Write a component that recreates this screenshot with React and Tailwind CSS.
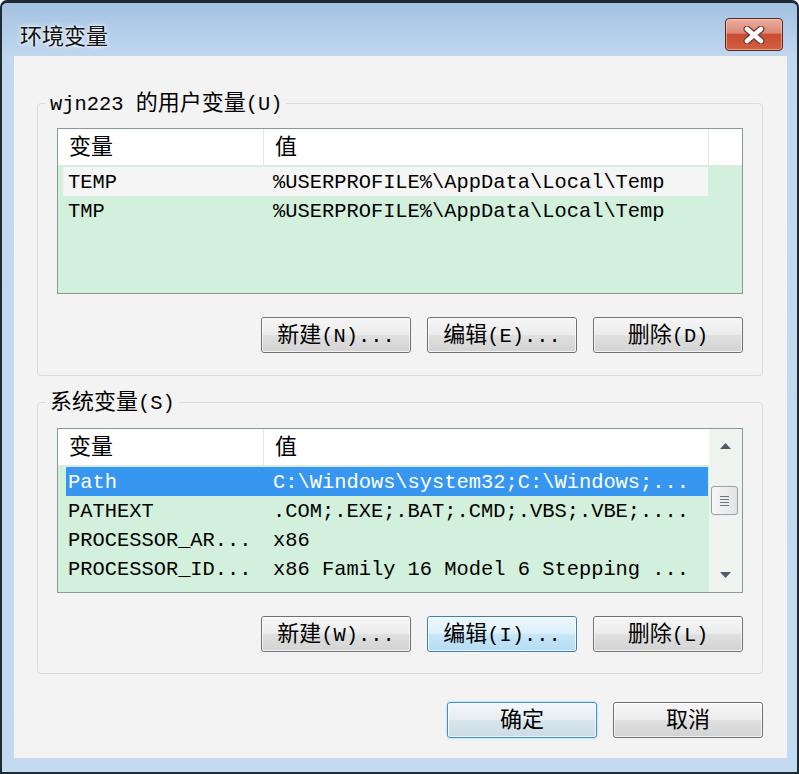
import React from 'react';

// 中日韩字符单独放大，ASCII 用等宽字体
const CJK = /([\u3400-\u9fff]+)/;

const T = ({ s }) =>
  s.split(CJK).map((part, i) =>
    i % 2 === 1 ? (
      <span key={i} className="text-[22px]">{part}</span>
    ) : (
      <span key={i}>{part}</span>
    )
  );

const btnStyles = {
  normal:
    'border-[#707070] bg-[linear-gradient(to_bottom,#f6f6f6_0%,#ececec_48%,#dfdfdf_52%,#d3d3d3_100%)]',
  hot: 'border-[#3c7fb1] bg-[linear-gradient(to_bottom,#eef7fd_0%,#dcf0fc_48%,#c6e6f8_52%,#b6dcf2_100%)]',
  def: 'border-[#3c93d2] bg-[linear-gradient(to_bottom,#f1f6f9_0%,#e6eef3_48%,#d9e5ec_52%,#ccdbe4_100%)] shadow-[0_0_2px_#7ec1ef]',
};

const Btn = ({ label, variant = 'normal' }) => (
  <button
    className={`w-[150px] h-[36px] rounded-[3px] border ${btnStyles[variant]} flex items-center justify-center text-black leading-none`}
  >
    <span className="block rounded-[2px] w-full h-full border border-white/70 pt-[4px] flex items-center justify-center">
      <T s={label} />
    </span>
  </button>
);

const Header = ({ filler }) => (
  <div className="h-[37px] bg-white border-b border-[#e3e6e4] flex items-center">
    <div className="w-[206px] h-full border-r border-[#e5e5e5] pl-[11px] pt-[3px] flex items-center">
      <span className="text-[22px]">变量</span>
    </div>
    <div
      className={`${filler ? 'w-[445px] border-r border-[#e5e5e5]' : 'flex-1'} h-full pl-[11px] pt-[3px] flex items-center`}
    >
      <span className="text-[22px]">值</span>
    </div>
    {filler && <div className="flex-1 h-full" />}
  </div>
);

const UpArrow = () => (
  <svg width="11" height="6" viewBox="0 0 11 6">
    <path d="M0 6 L5.5 0 L11 6 Z" fill="#4f5b66" />
  </svg>
);

const DownArrow = () => (
  <svg width="11" height="6" viewBox="0 0 11 6">
    <path d="M0 0 L5.5 6 L11 0 Z" fill="#4f5b66" />
  </svg>
);

const userVars = [
  ['TEMP', '%USERPROFILE%\\AppData\\Local\\Temp'],
  ['TMP', '%USERPROFILE%\\AppData\\Local\\Temp'],
];

const sysVars = [
  ['Path', 'C:\\Windows\\system32;C:\\Windows;...'],
  ['PATHEXT', '.COM;.EXE;.BAT;.CMD;.VBS;.VBE;....'],
  ['PROCESSOR_AR...', 'x86'],
  ['PROCESSOR_ID...', 'x86 Family 16 Model 6 Stepping ...'],
];

export default function App() {
  return (
    <div className="w-[799px] h-[774px] bg-white font-['Liberation_Mono','Noto_Sans_CJK_SC',monospace] text-[20.4px] text-black">
      <div className="w-[799px] h-[774px] rounded-t-[7px] border-x-2 border-t-[3px] border-b-2 border-[#1f2a33] bg-[linear-gradient(to_bottom,#a3c2e2_0px,#c2d8ef_56px,#c4daf1_100%)] flex flex-col">
        {/* 标题栏 */}
        <div className="h-[53px] flex justify-between items-start pt-[15px] pl-[18px] pr-[14px]">
          <div className="h-[33px] flex items-center text-[22px] font-['Noto_Sans_CJK_SC',sans-serif] text-[#111] [text-shadow:0_0_6px_#fff,0_0_3px_#fff]">
            环境变量
          </div>
          <button className="w-[58px] h-[33px] rounded-[4px] border border-[#5c2621] bg-[linear-gradient(to_bottom,#eaae9f_0%,#de8775_45%,#c94c33_50%,#d3603f_100%)] shadow-[inset_0_0_0_1px_rgba(255,220,210,0.5)] flex items-center justify-center">
            <svg width="22" height="18" viewBox="0 0 22 18">
              <path d="M4 3 L18 15 M18 3 L4 15" stroke="#6e3a33" strokeWidth="7" strokeLinecap="round" />
              <path d="M4 3 L18 15 M18 3 L4 15" stroke="#ffffff" strokeWidth="4.5" strokeLinecap="round" />
            </svg>
          </button>
        </div>

        {/* 客户区 */}
        <div className="ml-[12px] mr-[10px] h-[702px] bg-[#f3f3f3] flex flex-col">
          {/* 用户变量 */}
          <fieldset className="ml-[23px] w-[726px] mt-[34px] border border-[#d6dde2] rounded-[4px]">
            <legend className="ml-[8px] px-[4px] pt-[4px] leading-[22px]">
              <T s="wjn223 的用户变量(U)" />
            </legend>
            <div className="px-[19px] pt-[12px] pb-[22px]">
              <div className="h-[166px] border border-[#889a94] bg-[#d2f0dc] flex flex-col">
                <Header filler />
                <div className="pt-[1px]">
                  {userVars.map(([k, v], i) => (
                    <div
                      key={k}
                      className={`h-[29px] ml-[5px] w-[645px] pl-[5px] pt-[4px] flex items-center ${i === 0 ? 'bg-[#f4f5f4]' : ''}`}
                    >
                      <span className="w-[205px] shrink-0">{k}</span>
                      <span className="whitespace-pre">{v}</span>
                    </div>
                  ))}
                </div>
              </div>
              <div className="mt-[23px] flex justify-end gap-[16px]">
                <Btn label="新建(N)..." />
                <Btn label="编辑(E)..." />
                <Btn label="删除(D)" />
              </div>
            </div>
          </fieldset>

          {/* 系统变量 */}
          <fieldset className="ml-[23px] w-[726px] mt-[13px] border border-[#d6dde2] rounded-[4px]">
            <legend className="ml-[8px] px-[4px] pt-[4px] leading-[22px]">
              <T s="系统变量(S)" />
            </legend>
            <div className="px-[19px] pt-[13px] pb-[21px]">
              <div className="h-[165px] border border-[#889a94] bg-[#d2f0dc] flex">
                <div className="flex-1 flex flex-col">
                  <Header />
                  <div className="pt-[1px]">
                    {sysVars.map(([k, v], i) => (
                      <div
                        key={k}
                        className={`h-[29px] ml-[8px] w-[642px] pl-[2px] pt-[4px] flex items-center ${i === 0 ? 'bg-[#3797f0] text-white' : ''}`}
                      >
                        <span className="w-[205px] shrink-0 whitespace-pre">{k}</span>
                        <span className="whitespace-pre">{v}</span>
                      </div>
                    ))}
                  </div>
                </div>
                {/* 滚动条 */}
                <div className="w-[33px] bg-[#eef3ef] flex flex-col">
                  <div className="h-[34px] flex items-center justify-center">
                    <UpArrow />
                  </div>
                  <div className="h-[23px]" />
                  <div className="ml-[2px] w-[27px] h-[29px] rounded-[3px] border border-[#969fa8] bg-[linear-gradient(to_right,#f7f7f7,#e3e3e3)] flex flex-col items-center justify-center gap-[2px]">
                    <div className="w-[9px] h-[1px] bg-[#6b747c]" />
                    <div className="w-[9px] h-[1px] bg-[#6b747c]" />
                    <div className="w-[9px] h-[1px] bg-[#6b747c]" />
                    <div className="w-[9px] h-[1px] bg-[#6b747c]" />
                  </div>
                  <div className="flex-1" />
                  <div className="h-[34px] flex items-center justify-center">
                    <DownArrow />
                  </div>
                </div>
              </div>
              <div className="mt-[23px] flex justify-end gap-[16px]">
                <Btn label="新建(W)..." />
                <Btn label="编辑(I)..." variant="hot" />
                <Btn label="删除(L)" />
              </div>
            </div>
          </fieldset>

          {/* 底部按钮 */}
          <div className="mt-[28px] mr-[24px] flex justify-end gap-[16px]">
            <Btn label="确定" variant="def" />
            <Btn label="取消" />
          </div>
        </div>
      </div>
    </div>
  );
}
